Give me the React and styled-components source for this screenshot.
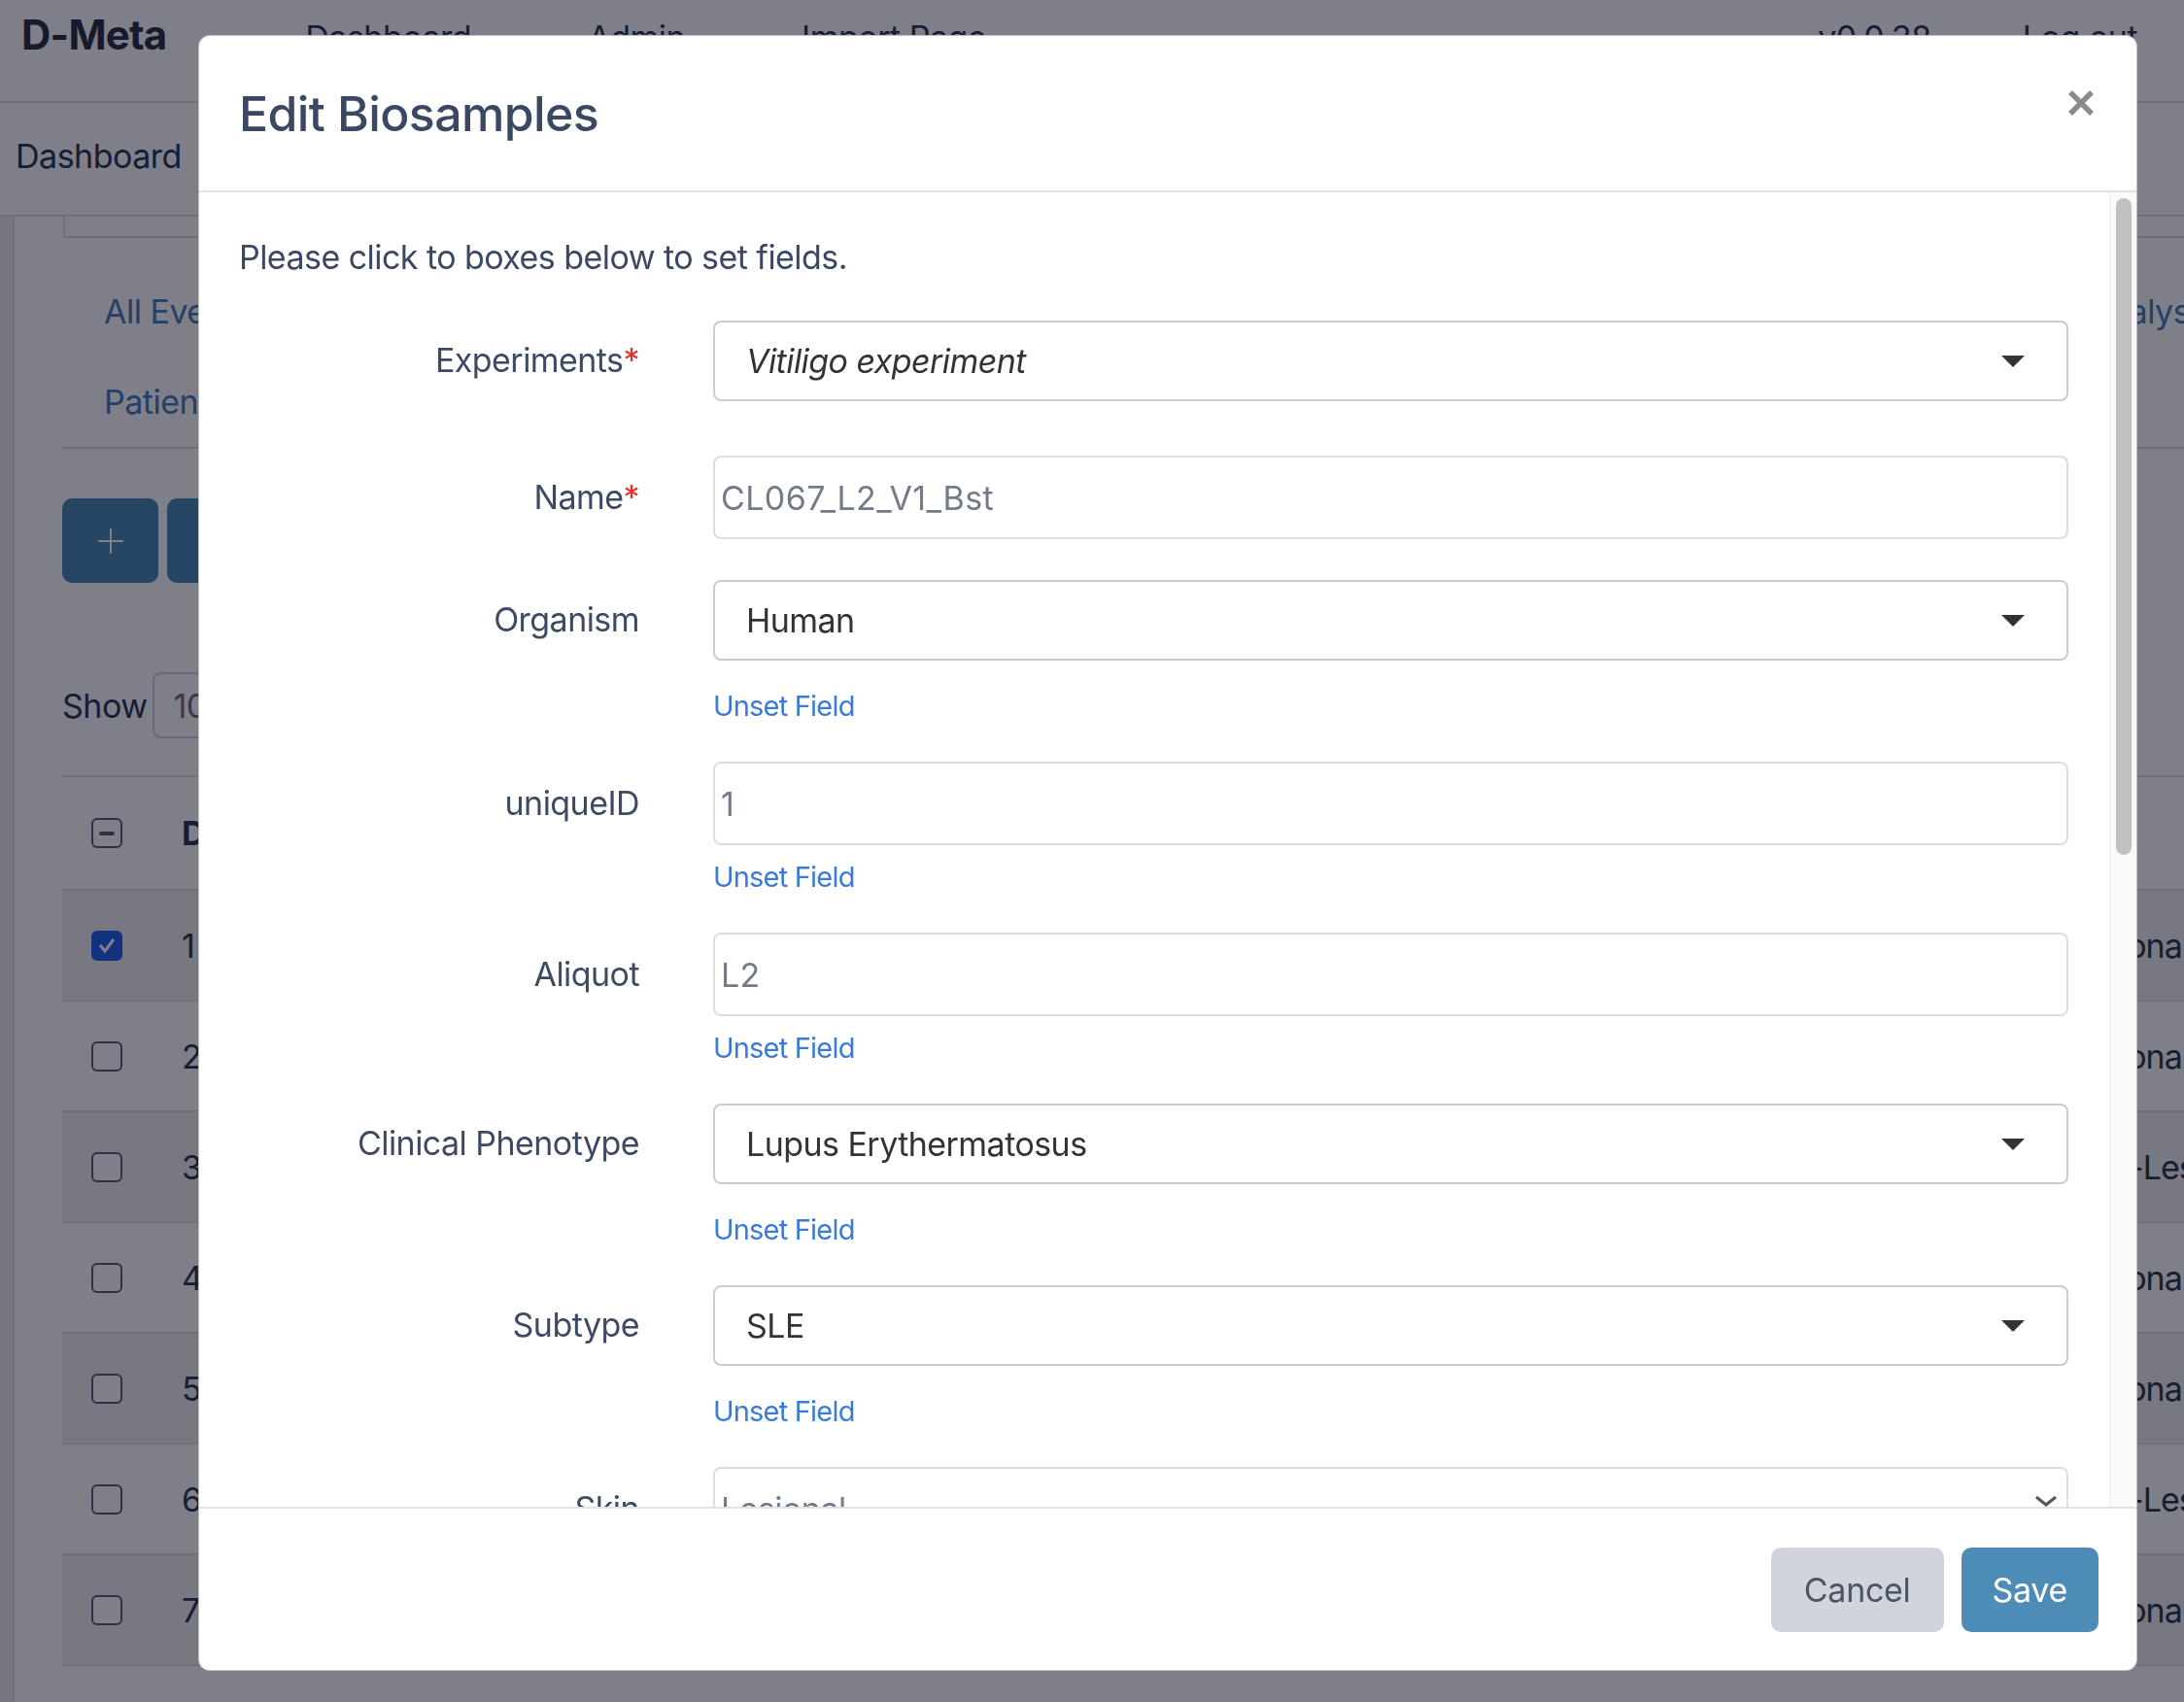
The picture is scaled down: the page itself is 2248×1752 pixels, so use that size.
import React from "react";
import styled, { createGlobalStyle } from "styled-components";

const GlobalStyle = createGlobalStyle`
  html, body {
    margin: 0;
    padding: 0;
  }
  body {
    font-family: Inter, "Noto Sans", "Liberation Sans", sans-serif;
    background: #fff;
    overflow: hidden;
  }
  * {
    box-sizing: border-box;
  }
`;

/* ---------- page behind the dialog ---------- */

const Page = styled.div`
  width: 2248px;
  height: 1752px;
  overflow: hidden;
  color: #2f3a52;
  font-size: 34px;
  letter-spacing: -0.5px;
`;

const TopNav = styled.header`
  height: 106px;
  display: flex;
  align-items: baseline;
  padding: 11px 48px 0 22px;
  border-bottom: 2px solid #dedee0;
`;

const Brand = styled.div`
  font-size: 42px;
  font-weight: 700;
  line-height: 50px;
  letter-spacing: -0.8px;
  color: #2d3446;
`;

const NavLinks = styled.nav`
  display: flex;
  gap: 120px;
  margin-left: 143px;
  line-height: 50px;
`;

const NavRight = styled.div`
  display: flex;
  gap: 94px;
  margin-left: auto;
  line-height: 50px;
`;

const SubBar = styled.div`
  height: 117px;
  display: flex;
  align-items: center;
  padding: 0 0 6px 16px;
  border-bottom: 2px solid #dedee0;
`;

const Main = styled.div`
  display: flex;
  height: 1600px;
`;

const LeftStrip = styled.div`
  flex: none;
  width: 15px;
  background: #eeeef0;
  border-right: 2px solid #dedee0;
`;

const Content = styled.div`
  flex: none;
  width: 2385px;
  padding-left: 49px;
`;

const CardBottom = styled.div`
  height: 22px;
  margin-left: 1px;
  border: 2px solid #dedee0;
  border-top: none;
`;

const TabList = styled.div`
  display: grid;
  grid-template-columns: 2042px auto;
  padding-left: 43px;
  margin-top: 29px;
  border-bottom: 2px solid #dedee0;
`;

const Tab = styled.a`
  line-height: 93px;
  color: #4b7fb6;
  text-decoration: none;
`;

const ActionRow = styled.div`
  display: flex;
  gap: 9px;
  margin-top: 51px;
`;

const ActionButton = styled.button`
  width: ${(p) => p.$w}px;
  height: 87px;
  border: none;
  border-radius: 10px;
  background: #4e8cb8;
  display: flex;
  align-items: center;
  justify-content: center;
`;

const ShowRow = styled.div`
  display: flex;
  align-items: center;
  gap: 5px;
  margin-top: 92px;
`;

const LengthSelect = styled.div`
  width: 130px;
  height: 68px;
  border: 2px solid #d4d4d8;
  border-radius: 8px;
  display: flex;
  align-items: center;
  padding-left: 20px;
  color: #6b7280;
`;

const Table = styled.div`
  margin-top: 38px;
`;

const TableRow = styled.div`
  display: grid;
  grid-template-columns: 123px 1fr 272px;
  align-items: center;
  height: ${(p) => (p.$head ? 117 : 114)}px;
  border-top: 2px solid #dedee0;
  background: ${(p) => (p.$striped ? "#f0f0f2" : "transparent")};
  font-weight: ${(p) => (p.$head ? 700 : 400)};
`;

const CheckCell = styled.div`
  padding-left: 30px;
  display: flex;
`;

const CheckBox = styled.span`
  width: 32px;
  height: 31px;
  border-radius: 6px;
  border: 2.5px solid ${(p) => (p.$checked ? "#2563eb" : "#5b6272")};
  background: ${(p) => (p.$checked ? "#2563eb" : "#fff")};
  display: flex;
  align-items: center;
  justify-content: center;
`;

const MinusBar = styled.span`
  width: 16px;
  height: 4px;
  border-radius: 2px;
  background: #5b6272;
`;

const SkinCell = styled.div`
  white-space: nowrap;
  letter-spacing: -1px;
`;

/* ---------- dialog ---------- */

const Backdrop = styled.div`
  position: fixed;
  inset: 0;
  background: rgba(0, 0, 20, 0.5);
  display: flex;
  align-items: flex-start;
`;

const Dialog = styled.div`
  margin: 36px 0 0 204px;
  width: 1996px;
  height: 1684px;
  background: #fff;
  border: 1px solid rgba(0, 0, 0, 0.25);
  border-radius: 12px;
  display: flex;
  flex-direction: column;
  overflow: hidden;
`;

const DialogHeader = styled.div`
  flex: 0 0 161px;
  display: flex;
  align-items: center;
  padding: 0 43px 0 41px;
  border-bottom: 2px solid #dee2e6;
`;

const Title = styled.h2`
  margin: 0;
  font-size: 50px;
  font-weight: 500;
  line-height: 1.2;
  letter-spacing: -0.6px;
  color: #3b4863;
`;

const CloseButton = styled.button`
  align-self: flex-start;
  margin: 55px 0 0 auto;
  width: 28px;
  height: 28px;
  padding: 0;
  border: none;
  background: none;
  display: flex;
`;

const DialogBody = styled.div`
  flex: 1;
  min-height: 0;
  display: flex;
  overflow: hidden;
`;

const FormArea = styled.div`
  flex: 1;
  padding: 41px 42px 0 41px;
  letter-spacing: -0.55px;
`;

const ScrollTrack = styled.div`
  width: 28px;
  background: #fafafa;
  border-left: 1px solid #ebebeb;
  padding: 6px 5px 0 6px;
`;

const ScrollThumb = styled.div`
  height: 676px;
  border-radius: 8px;
  background: #c1c1c1;
`;

const Intro = styled.p`
  margin: 0 0 40px;
  font-size: 34px;
  line-height: 51px;
  color: #3b4863;
`;

const FieldRow = styled.div`
  display: grid;
  grid-template-columns: 412px 1fr;
  column-gap: 76px;
  row-gap: ${(p) => (p.$select ? 32 : 18)}px;
  align-items: center;
  margin-bottom: ${(p) => (p.$select && !p.$unset ? 56 : 42)}px;
`;

const Label = styled.label`
  text-align: right;
  font-size: 34px;
  line-height: 1.2;
  color: #3d4a64;
`;

const Required = styled.span`
  color: #e5302a;
`;

const SelectControl = styled.div`
  height: 83px;
  border: 2px solid #cccccc;
  border-radius: 8px;
  display: flex;
  align-items: center;
  padding: 0 43px 0 32px;
  font-size: 34px;
  color: #333333;
  font-style: ${(p) => (p.$italic ? "italic" : "normal")};
`;

const Caret = styled.svg`
  margin-left: auto;
  flex: none;
`;

const TextInput = styled.input`
  width: 100%;
  height: 86px;
  border: 2px solid #dcdde2;
  border-radius: 8px;
  padding: 0 6px;
  font-family: Inter, "Noto Sans", "Liberation Sans", sans-serif;
  font-size: 34px;
  letter-spacing: 0.4px;
  color: #727b89;
  background: #fff;
  outline: none;
`;

const NativeSelect = styled.div`
  height: 86px;
  border: 2px solid #dcdde2;
  border-radius: 8px;
  display: flex;
  align-items: center;
  padding: 0 9px 0 6px;
  font-size: 34px;
  color: #727b89;
`;

const UnsetLink = styled.a`
  grid-column: 2;
  justify-self: start;
  font-size: 29px;
  line-height: 30px;
  letter-spacing: -0.8px;
  color: #3b7bd8;
  text-decoration: none;
`;

const DialogFooter = styled.div`
  flex: 0 0 168px;
  display: flex;
  align-items: center;
  justify-content: flex-end;
  gap: 18px;
  padding-right: 39px;
  border-top: 2px solid #dee2e6;
`;

const FooterButton = styled.button`
  height: 87px;
  padding: 0 ${(p) => p.$pad}px;
  border: none;
  border-radius: 10px;
  font-family: Inter, "Noto Sans", "Liberation Sans", sans-serif;
  font-size: 34px;
  letter-spacing: -0.3px;
  background: ${(p) => (p.$primary ? "#4e8cb8" : "#d1d5db")};
  color: ${(p) => (p.$primary ? "#ffffff" : "#4b5568")};
`;

const tableRows = [
  { id: 1, checked: true, skin: "Lesional" },
  { id: 2, skin: "Lesional" },
  { id: 3, skin: "Non-Lesional" },
  { id: 4, skin: "Lesional" },
  { id: 5, skin: "Lesional" },
  { id: 6, skin: "Non-Lesional" },
  { id: 7, skin: "Lesional" },
  { id: 8, skin: "Lesional" },
];

const fields = [
  { label: "Experiments", required: true, kind: "select", value: "Vitiligo experiment", italic: true },
  { label: "Name", required: true, kind: "input", value: "CL067_L2_V1_Bst" },
  { label: "Organism", kind: "select", value: "Human", unset: true },
  { label: "uniqueID", kind: "input", value: "1", unset: true },
  { label: "Aliquot", kind: "input", value: "L2", unset: true },
  { label: "Clinical Phenotype", kind: "select", value: "Lupus Erythermatosus", unset: true },
  { label: "Subtype", kind: "select", value: "SLE", unset: true },
  { label: "Skin", kind: "native", value: "Lesional", unset: true },
];

function Control({ field }) {
  if (field.kind === "select") {
    return (
      <SelectControl $italic={field.italic}>
        {field.value}
        <Caret width="24" height="12" viewBox="0 0 24 12">
          <polygon points="0,0 24,0 12,12" fill="#333" />
        </Caret>
      </SelectControl>
    );
  }
  if (field.kind === "native") {
    return (
      <NativeSelect>
        {field.value}
        <Caret width="24" height="28" viewBox="0 0 24 28">
          <polyline points="2,2 12,10 22,2" fill="none" stroke="#555" strokeWidth="3" />
          <polyline points="2,26 12,18 22,26" fill="none" stroke="#555" strokeWidth="3" />
        </Caret>
      </NativeSelect>
    );
  }
  return <TextInput readOnly value={field.value} />;
}

function BackgroundPage() {
  return (
    <Page>
      <TopNav>
        <Brand>D-Meta</Brand>
        <NavLinks>
          <span>Dashboard</span>
          <span>Admin</span>
          <span>Import Page</span>
        </NavLinks>
        <NavRight>
          <span>v0.0.38</span>
          <span>Log out</span>
        </NavRight>
      </TopNav>
      <SubBar>Dashboard</SubBar>
      <Main>
        <LeftStrip />
        <Content>
          <CardBottom />
          <TabList>
            <Tab>All Events</Tab>
            <Tab>Analysis</Tab>
            <Tab>Patients</Tab>
          </TabList>
          <ActionRow>
            <ActionButton $w={99}>
              <svg width="28" height="28" viewBox="0 0 28 28">
                <path d="M14 1v26M1 14h26" stroke="#fff" strokeWidth="2" />
              </svg>
            </ActionButton>
            <ActionButton $w={99} />
          </ActionRow>
          <ShowRow>
            Show
            <LengthSelect>10</LengthSelect>
          </ShowRow>
          <Table>
            <TableRow $head>
              <CheckCell>
                <CheckBox>
                  <MinusBar />
                </CheckBox>
              </CheckCell>
              <div>DB ID</div>
              <SkinCell />
            </TableRow>
            {tableRows.map((row) => (
              <TableRow key={row.id} $striped={row.id % 2 === 1}>
                <CheckCell>
                  <CheckBox $checked={row.checked}>
                    {row.checked && (
                      <svg width="20" height="18" viewBox="0 0 20 18">
                        <polyline points="3,9 8,15 17,3" fill="none" stroke="#fff" strokeWidth="3" />
                      </svg>
                    )}
                  </CheckBox>
                </CheckCell>
                <div>{row.id}</div>
                <SkinCell>{row.skin}</SkinCell>
              </TableRow>
            ))}
          </Table>
        </Content>
      </Main>
    </Page>
  );
}

export default function App() {
  return (
    <>
      <GlobalStyle />
      <BackgroundPage />
      <Backdrop>
        <Dialog>
          <DialogHeader>
            <Title>Edit Biosamples</Title>
            <CloseButton aria-label="Close">
              <svg width="28" height="28" viewBox="0 0 28 28">
                <path d="M3 3L25 25M25 3L3 25" stroke="#8a8a90" strokeWidth="5.5" />
              </svg>
            </CloseButton>
          </DialogHeader>
          <DialogBody>
            <FormArea>
              <Intro>Please click to boxes below to set fields.</Intro>
              {fields.map((field) => (
                <FieldRow
                  key={field.label}
                  $select={field.kind === "select"}
                  $unset={field.unset}
                >
                  <Label>
                    {field.label}
                    {field.required && <Required>*</Required>}
                  </Label>
                  <Control field={field} />
                  {field.unset && <UnsetLink href="#">Unset Field</UnsetLink>}
                </FieldRow>
              ))}
            </FormArea>
            <ScrollTrack>
              <ScrollThumb />
            </ScrollTrack>
          </DialogBody>
          <DialogFooter>
            <FooterButton $pad={34}>Cancel</FooterButton>
            <FooterButton $pad={32} $primary>
              Save
            </FooterButton>
          </DialogFooter>
        </Dialog>
      </Backdrop>
    </>
  );
}
